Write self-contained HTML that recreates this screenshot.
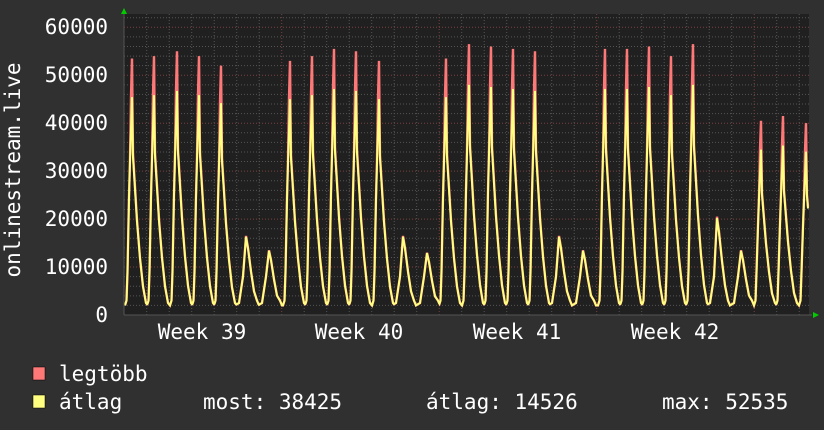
<!DOCTYPE html><html><head><meta charset="utf-8"><style>
body{margin:0;width:824px;height:430px;background:#303030;overflow:hidden}
svg{display:block}
text{font-family:"DejaVu Sans Mono","Liberation Mono",monospace;font-size:21px;fill:#fff}
</style></head><body>
<svg id="s" width="824" height="430" xmlns="http://www.w3.org/2000/svg">
<rect x="124" y="14" width="685" height="301" fill="#202020"/>
<g id="grid"></g>
<polyline id="r" fill="none" stroke="#ff7878" stroke-width="2.4"/>
<polyline id="y" fill="none" stroke="#ffff80" stroke-width="2"/>
<line x1="124" y1="315" x2="812" y2="315" stroke="#555" stroke-width="1"/>
<line x1="124" y1="10" x2="124" y2="315" stroke="#555" stroke-width="1"/>
<polygon points="121,14 127,14 124,8" fill="#0c0"/>
<polygon points="813,312 813,318 819,315" fill="#0c0"/>
<g text-anchor="end">
<text x="108" y="34">60000</text><text x="108" y="82">50000</text><text x="108" y="130">40000</text>
<text x="108" y="178">30000</text><text x="108" y="226">20000</text><text x="108" y="274">10000</text>
<text x="108" y="322">0</text></g>
<g text-anchor="middle">
<text x="202" y="339">Week 39</text><text x="359" y="339">Week 40</text>
<text x="517" y="339">Week 41</text><text x="675" y="339">Week 42</text></g>
<text transform="translate(20,170) rotate(-90)" text-anchor="middle">onlinestream.live</text>
<rect x="33" y="367" width="12" height="13" fill="#ff7878" stroke="#000" stroke-width="0.5"/>
<rect x="33" y="395" width="12" height="13" fill="#ffff80" stroke="#000" stroke-width="0.5"/>
<text x="59" y="381">legtöbb</text>
<text x="59" y="409">átlag</text>
<text x="203" y="409">most: 38425</text>
<text x="426" y="409">átlag: 14526</text>
<text x="662" y="409">max: 52535</text>
</svg>
<script>
var g=document.getElementById('grid'),h='';
function Y(v){return 315-v*0.004795;}
for(var v=2000;v<=62000;v+=2000){var y=Y(v);var maj=v%10000==0;
h+='<line x1="124" x2="809" y1="'+y+'" y2="'+y+'" stroke="'+(maj?'#7a4040':'#555')+'" stroke-dasharray="1,2"/>';}
for(var i=-6;i<32;i++){var x=281.7+(i-7)*22.5;if(x<125||x>809)continue;var maj=Math.abs(((x-281.7)/157.5)-Math.round((x-281.7)/157.5))<0.01;
h+='<line y1="14" y2="315" x1="'+x+'" x2="'+x+'" stroke="'+(maj?'#7a4040':'#555')+'" stroke-dasharray="1,2"/>';}
g.innerHTML=h;
var px=[132,154,177,199,221,246,269,290,312,334,356,379,403,427,446,469,491,513,535,559,583,605,627,649,671,693,717,741,761,783,806];
var pv=[53500,54000,55000,54000,52000,16500,13500,53000,54000,55500,55000,53000,16500,13000,53500,56500,56000,55500,55000,16500,13500,55500,55500,56000,54000,56500,20500,13500,40500,41500,40000];
function val(x,avg){var best=2000;
for(var i=0;i<px.length;i++){var d=x-px[i],P=pv[i],t;
var wk=P<25000;
var k=P/54000;
var top=avg&&!wk?P*0.87:P;
var pts=wk?[[-11,2000],[-7,2500],[-3,8000],[0,top],[2,P*0.85],[5,P*0.55],[8,P*0.3],[11,3000],[13,2000]]:
[[-7,2000],[-5.5,3000],[-4.5,9000],[-3,25000*k],[-2,33000*k],[-1,(avg?40000:46000)*k],[0,top],[1,34000*k],[3,27000*k],[5,20000*k],[8,12000*k],[11,6000*k],[14,2500],[16,2000]];
if(d<pts[0][0]||d>pts[pts.length-1][0])continue;
for(var j=1;j<pts.length;j++){if(d<=pts[j][0]){var a=pts[j-1],b=pts[j],f=(d-a[0])/(b[0]-a[0]);t=a[1]+f*(b[1]-a[1]);break;}}
if(t>best)best=t;}
return avg?Math.min(best,best*0.97+300):best;}
var r='',yy='';
for(var x=125;x<=808;x+=0.5){r+=x+','+Y(val(x,false)).toFixed(1)+' ';yy+=x+','+Y(val(x,true)).toFixed(1)+' ';}
document.getElementById('r').setAttribute('points',r);
document.getElementById('y').setAttribute('points',yy);
</script>
</body></html>
